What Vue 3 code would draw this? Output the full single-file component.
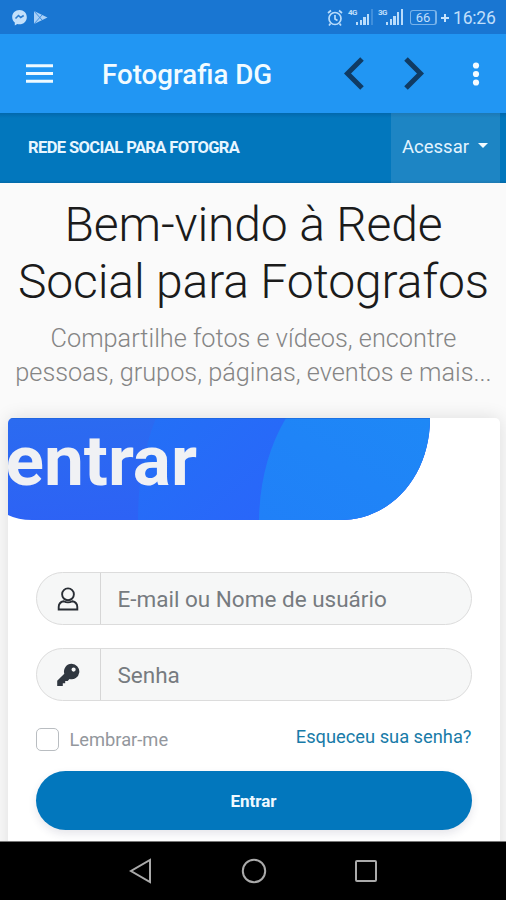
<script setup>
import { ref } from 'vue'

const login = ref('')
const password = ref('')
const remember = ref(false)
const weak = [3, 5, 8, 11, 16]
const strong = [3, 6, 9, 13, 16]
</script>

<template>
  <div class="screen">
    <div class="status">
      <svg class="status-left" width="40" height="18" viewBox="0 0 40 18">
        <path d="M7.500 1C3.300 1 .2 4 .2 8c0 2.400 1 4.400 2.600 5.600V16.500L5.300 15q1 .3 2.200.3c4.200 0 7.300-3 7.300-7.100S11.700 1 7.500 1Z" fill="#c3e0fb" />
        <path d="m3.500 9.500 3-3 2.200 2 3-2" fill="none" stroke="#2b7cd0" stroke-width="1.600" />
        <path d="M22 2v13L35.500 8.500Z" fill="#a9d0f7" />
        <path d="m22 2 8 9M22 15l8-9" stroke="#3f8fe0" stroke-width="1" />
      </svg>
      <div class="status-right">
        <svg class="alarm" width="16" height="18" viewBox="0 0 16 18">
          <g fill="none" stroke="#b9dcfb" stroke-width="1.700">
            <circle cx="8" cy="9.500" r="6" />
            <path d="M8 6v4l2.500 1.500M1 4l3-2.500M15 4l-3-2.500M3.500 14.500 2 16.500M12.500 14.500l1.500 2" />
          </g>
        </svg>
        <div class="signal first">
          <span class="gen">4G</span>
          <i v-for="(h, i) in weak" :key="h" :class="{ dim: i === 4 }" :style="{ height: h + 'px' }"></i>
        </div>
        <div class="signal second">
          <span class="gen">3G</span>
          <i v-for="h in strong" :key="h" :style="{ height: h + 'px' }"></i>
        </div>
        <div class="battery">66</div>
        <svg class="plus" width="8" height="8" viewBox="0 0 8 8"><path d="M4 0v8M0 4h8" stroke="#c7e3fc" stroke-width="2" /></svg>
        <span class="clock">16:26</span>
      </div>
    </div>

    <header class="appbar">
      <svg class="burger" width="27" height="19" viewBox="0 0 27 19"><path d="M0 1.700h27M0 9.500h27M0 17.200h27" stroke="#effaff" stroke-width="3" /></svg>
      <span class="title">Fotografia DG</span>
      <svg class="prev" width="21" height="33" viewBox="0 0 21 33"><path d="M18 2 3.500 16.500 18 31" fill="none" stroke="#103b63" stroke-width="5" /></svg>
      <svg class="next" width="21" height="33" viewBox="0 0 21 33"><path d="m3 2 14.500 14.500L3 31" fill="none" stroke="#103b63" stroke-width="5" /></svg>
      <svg class="more" width="8" height="24" viewBox="0 0 8 24" fill="#f4fbff"><circle cx="4" cy="3.500" r="3.100" /><circle cx="4" cy="12" r="3.100" /><circle cx="4" cy="20.500" r="3.100" /></svg>
    </header>

    <nav class="sitebar">
      <span class="brand">REDE SOCIAL PARA FOTOGRA</span>
      <div class="access"><span>Acessar</span><i></i></div>
    </nav>

    <main>
      <h1>Bem-vindo à Rede<br />Social para Fotografos</h1>
      <p class="lead">Compartilhe fotos e vídeos, encontre<br />pessoas, grupos, páginas, eventos e mais...</p>

      <section class="card">
        <div class="banner">
          <svg width="422" height="102" viewBox="0 0 422 102">
            <defs>
              <linearGradient id="left" x1="0" y1="0" x2="0.300" y2="1"><stop stop-color="#2b6bf0" /><stop offset="1" stop-color="#2d62f5" /></linearGradient>
              <linearGradient id="mid" x1="0" y1="0" x2="1" y2="0.400"><stop stop-color="#2370f6" /><stop offset="1" stop-color="#2c62fb" /></linearGradient>
              <linearGradient id="right" x1="0" y1="1" x2="1" y2="0"><stop stop-color="#2080f8" /><stop offset="1" stop-color="#1e88f6" /></linearGradient>
              <clipPath id="shape"><path d="M0 0H422C422 57 384 102 332 102H24Q10 102 0 97Z" /></clipPath>
            </defs>
            <g clip-path="url(#shape)">
              <path d="M0 0h422v102H0Z" fill="url(#left)" />
              <path d="M148 0Q130 45 130 102H422V0Z" fill="url(#mid)" />
              <path d="M278 0Q252 44 251 102H422V0Z" fill="url(#right)" />
              <path d="M0 .5h422" stroke="#1763d6" stroke-opacity=".55" />
            </g>
          </svg>
          <span class="banner-text">entrar</span>
        </div>

        <form @submit.prevent>
          <label class="field">
            <span class="icon">
              <svg width="22" height="24" viewBox="0 0 22 24" fill="none" stroke="#292e35" stroke-width="1.900"><circle cx="11" cy="7.300" r="5.900" /><path d="M6.700 14.200C3.700 14.800 1.700 16.900 1.700 20v2.500h18.600V20c0-3.100-2-5.200-5-5.800-1.400.8-2.800 1.200-4.300 1.200s-2.900-.4-4.300-1.200Z" /></svg>
            </span>
            <input v-model="login" type="text" placeholder="E-mail ou Nome de usuário" />
          </label>
          <label class="field">
            <span class="icon">
              <svg width="24" height="24" viewBox="0 0 24 24"><path fill="#303740" fill-rule="evenodd" d="M15.500.8a7.700 7.700 0 1 1-2 15.100l-1.800 2H9.200v2.400H6.800v2.600H1.200v-5.100L8.300 10.700A7.700 7.700 0 0 1 15.500.8Zm2.100 3.700a2.100 2.100 0 1 0 0 4.200 2.100 2.100 0 0 0 0-4.200Z" /></svg>
            </span>
            <input v-model="password" type="password" placeholder="Senha" />
          </label>
          <div class="options">
            <label class="remember"><input v-model="remember" type="checkbox" /><span>Lembrar-me</span></label>
            <a class="forgot">Esqueceu sua senha?</a>
          </div>
          <button class="submit">Entrar</button>
        </form>
      </section>
    </main>

    <footer class="system">
      <svg width="24" height="26" viewBox="0 0 24 26"><path d="M21 2v22L2 13Z" /></svg>
      <svg width="26" height="26" viewBox="0 0 26 26"><circle cx="13" cy="13" r="11.200" /></svg>
      <svg width="24" height="26" viewBox="0 0 24 26"><rect x="2" y="3" width="20" height="20" rx="1" /></svg>
    </footer>
  </div>
</template>

<style>
body { margin: 0; }
</style>

<style scoped>
* { box-sizing: border-box; }
.screen { width: 506px; height: 900px; display: flex; flex-direction: column; overflow: hidden; background: #fafafa; font-family: Roboto, "Liberation Sans", sans-serif; white-space: nowrap; }
svg { display: block; flex: none; }

.status { height: 34px; flex: none; background: #1976d2; display: flex; justify-content: space-between; padding: 9px 10px 0 12px; }
.status-right { display: flex; align-items: flex-start; color: #c0dffb; height: 18px; }
.alarm { margin-right: 5px; }
.signal { display: flex; align-items: flex-end; height: 16px; gap: 1.500px; position: relative; padding-left: 8px; }
.signal.first { width: 25px; margin-right: 5px; }
.signal.second { width: 26px; margin-right: 6px; }
.signal i { width: 2.200px; flex: none; background: #b9dcfb; }
.signal i.dim { opacity: .25; }
.gen { position: absolute; left: 0; top: 0; font-size: 8px; line-height: 8px; font-weight: 700; letter-spacing: -.5px; }
.battery { width: 27px; height: 15px; margin-top: 1px; border: 1.500px solid #79b3ea; border-right-width: 2px; border-radius: 3px; font-size: 13px; line-height: 13px; text-align: center; }
.plus { margin: 5px 4px 0 4px; }
.clock { font-size: 17.500px; line-height: 18px; width: 43px; letter-spacing: -.2px; }

.appbar { height: 79px; flex: none; background: #2196f3; display: flex; align-items: center; padding: 0 26px; }
.title { margin-left: 49px; width: 171px; font-size: 27.700px; font-weight: 500; color: #f2fbff; padding-top: 2px; }
.prev { margin-left: 71px; }
.next { margin-left: 38px; }
.more { margin-left: 48px; }

.sitebar { height: 70px; flex: none; background: linear-gradient(#0268ac 0, #0277bd 5px, #0277bd 67px, #0269a8 70px); display: flex; justify-content: space-between; align-items: center; padding: 0 6px 0 28px; }
.brand { font-size: 16.500px; font-weight: 700; color: #e8f6ff; letter-spacing: -.6px; margin-top: -2px; }
.access { width: 109px; height: 70px; background: rgba(255, 255, 255, .11); display: flex; align-items: center; padding: 0 0 3px 11px; color: #e3f4ff; font-size: 18.500px; }
.access i { margin: -3px 0 0 9px; border: 5px solid transparent; border-top-color: #f2fbff; border-bottom: 0; }

main { flex: 1; min-height: 0; overflow: hidden; padding: 13px 6.500px 0 7.500px; text-align: center; }
h1 { margin: 0; font-size: 48px; line-height: 57px; font-weight: 300; color: #1b1b1b; letter-spacing: -.15px; }
.lead { margin: 12px 0 0; font-size: 25.300px; line-height: 34px; font-weight: 300; color: #858585; }

.card { margin: 28px 0 0; height: 460px; background: #fff; border-radius: 5px 5px 0 0; box-shadow: 0 0 18px rgba(0, 0, 0, .12); text-align: left; }
.banner { position: relative; height: 102px; overflow: hidden; border-radius: 5px 0 0 0; }
.banner-text { position: absolute; left: -2px; top: 2px; font-size: 71.200px; line-height: 82px; font-weight: 700; color: #f0f1f4; }
form { padding: 52px 28px 0; }
.field { display: flex; height: 53px; margin-bottom: 23px; border: 1px solid #dcdcdc; border-radius: 27px; background: #f6f7f7; overflow: hidden; }
.icon { width: 64px; flex: none; border-right: 1px solid #d6d6d6; display: flex; align-items: center; justify-content: center; }
.field input { flex: 1; min-width: 0; border: 0; outline: 0; background: transparent; padding: 0 17px; font: 400 22.500px Roboto, sans-serif; color: #495057; }
.field input::placeholder { color: #767b80; opacity: 1; }
.options { display: flex; justify-content: space-between; height: 34px; margin-top: -1px; }
.remember { display: flex; align-items: center; gap: 11px; color: #93979d; font-size: 18.300px; margin-top: -2px; }
.remember input { appearance: none; width: 23px; height: 23px; margin: 0; border: 1.500px solid #b9bdc1; border-radius: 5px; background: #fff; }
.forgot { color: #187ba8; font-size: 18.300px; line-height: 28px; }
.submit { display: block; width: 100%; height: 59px; margin-top: 14px; border: 0; border-radius: 30px; background: #0277bd; color: #eff9ff; font: 700 17px Roboto, sans-serif; box-shadow: 0 4px 9px rgba(50, 50, 93, .12); }

.system { height: 59px; flex: none; background: #000; border-top: 1px solid #777; display: flex; justify-content: space-between; align-items: center; padding: 0 128px 0 129px; }
.system svg { fill: none; stroke: #aaa; stroke-width: 2; }
</style>
